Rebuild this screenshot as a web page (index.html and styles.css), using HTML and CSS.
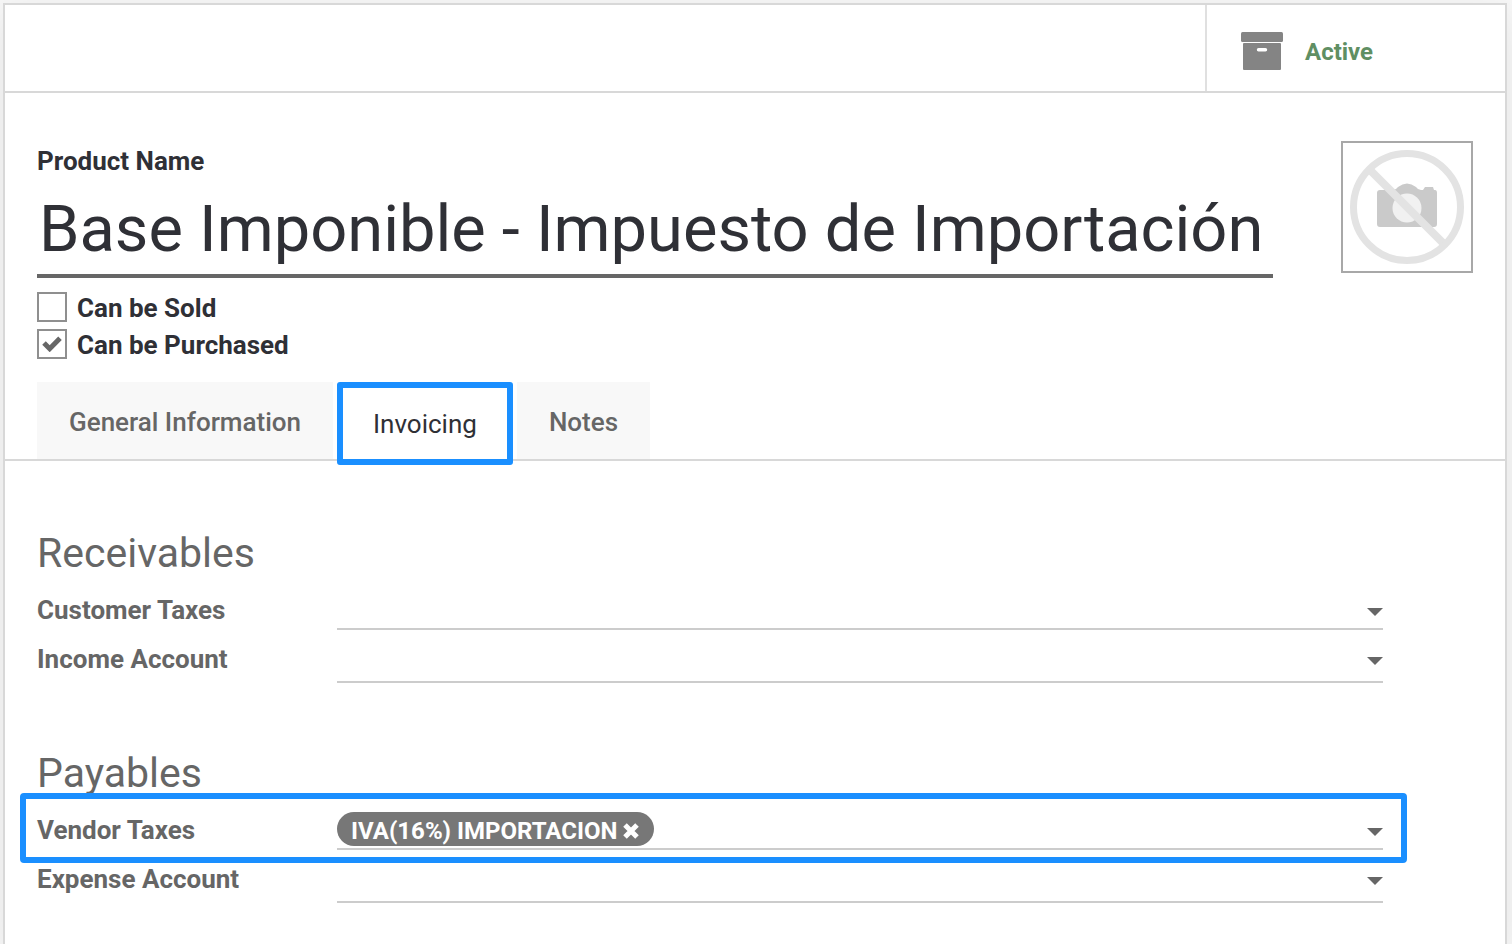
FILE: index.html
```html
<!DOCTYPE html>
<html lang="en">
<head>
<meta charset="utf-8">
<title>Base Imponible - Impuesto de Importación</title>
<link rel="stylesheet" href="styles.css">
</head>
<body>
<main class="sheet">
  <header class="button-box">
    <button class="stat-button" type="button">
      <svg class="archive-icon" viewBox="0 0 42 38" aria-hidden="true">
        <rect x="0" y="0" width="42" height="10" rx="1.5"/>
        <path fill-rule="evenodd" d="M3 11h36q1 0 1 1v25q0 1-1 1H3q-1 0-1-1V12q0-1 1-1zM17.500 16a1.700 1.700 0 0 0 0 3.400h7a1.700 1.700 0 0 0 0-3.400z"/>
      </svg>
      <span class="stat-text">Active</span>
    </button>
  </header>

  <section class="product">
    <div class="title">
      <label class="title-label" for="name">Product Name</label>
      <input class="title-input" id="name" type="text" value="Base Imponible - Impuesto de Importación">
      <div class="options">
        <label class="option">
          <span class="check"><input class="check-box" type="checkbox"></span>
          <span class="option-text">Can be Sold</span>
        </label>
        <label class="option">
          <span class="check">
            <input class="check-box" type="checkbox" checked>
            <svg class="check-mark" viewBox="0 0 20 16" aria-hidden="true"><path d="M2 7l5.700 5.700L18 2.300"/></svg>
          </span>
          <span class="option-text">Can be Purchased</span>
        </label>
      </div>
    </div>
    <button class="picture" type="button" aria-label="Product image">
      <svg viewBox="0 0 128 128" aria-hidden="true">
        <path fill="#cacaca" d="M37 47h13q3 0 5-3 9-7 18 0 2 3 5 3h2l2-3h8l1 3h1q2 0 2 3v31q0 3-3 3H37q-3 0-3-3V50q0-3 3-3z"/>
        <circle cx="64" cy="65" r="14.500" fill="#f1f1f1"/>
        <path d="M27 27l74 74" stroke="#e3e3e3" stroke-width="8"/>
        <circle cx="64" cy="64" r="53.500" fill="none" stroke="#e3e3e3" stroke-width="7"/>
      </svg>
    </button>
  </section>

  <nav class="tabs" role="tablist">
    <button class="tab" role="tab" type="button" aria-selected="false">General Information</button>
    <button class="tab tab-active" role="tab" type="button" aria-selected="true">Invoicing</button>
    <button class="tab" role="tab" type="button" aria-selected="false">Notes</button>
  </nav>

  <div class="page">
    <section class="group">
      <h2 class="group-title">Receivables</h2>
      <div class="row row-tags">
        <label class="row-label" for="customer-taxes">Customer Taxes</label>
        <div class="field field-tags">
          <select class="field-select" id="customer-taxes"><option></option></select>
          <span class="caret"></span>
        </div>
      </div>
      <div class="row">
        <label class="row-label" for="income-account">Income Account</label>
        <div class="field">
          <select class="field-select" id="income-account"><option></option></select>
          <span class="caret"></span>
        </div>
      </div>
    </section>

    <section class="group">
      <h2 class="group-title">Payables</h2>
      <div class="row row-tags row-marked">
        <label class="row-label" for="vendor-taxes">Vendor Taxes</label>
        <div class="field field-tags">
          <span class="tag">IVA(16%) IMPORTACION
            <button class="tag-remove" type="button" aria-label="Remove">
              <svg viewBox="0 0 16 16" aria-hidden="true"><path d="M2 2l12 12M14 2L2 14"/></svg>
            </button>
          </span>
          <select class="field-select" id="vendor-taxes"><option></option></select>
          <span class="caret"></span>
        </div>
      </div>
      <div class="row">
        <label class="row-label" for="expense-account">Expense Account</label>
        <div class="field">
          <select class="field-select" id="expense-account"><option></option></select>
          <span class="caret"></span>
        </div>
      </div>
    </section>
  </div>
</main>
</body>
</html>
```
FILE: styles.css
```css
* {
  box-sizing: border-box;
}

body {
  margin: 0;
  padding: 3px 5px 0 3px;
  background: #f7f7f7;
  font: 26px/38px Roboto, sans-serif;
  color: #2f3036;
}

button,
input,
select {
  margin: 0;
  padding: 0;
  border: 0;
  background: none;
  font: inherit;
  color: inherit;
}

.sheet {
  min-height: calc(100vh - 3px);
  border: 2px solid #d8d8d8;
  border-bottom: 0;
  background: #fff;
  box-shadow: 0 10px 40px rgba(0, 0, 0, 0.08);
}

.button-box {
  display: flex;
  justify-content: flex-end;
  border-bottom: 2px solid #d8d8d8;
}

.stat-button {
  display: flex;
  align-items: center;
  gap: 22px;
  width: 300px;
  height: 86px;
  padding: 6px 34px 0;
  border-left: 2px solid #e0e0e0;
}

.stat-text {
  padding-top: 2px;
  font-size: 24px;
  font-weight: 700;
  color: #5f8f63;
}

.archive-icon {
  width: 42px;
  height: 38px;
  fill: #848484;
}

.product {
  display: flex;
  align-items: flex-start;
  gap: 68px;
  padding: 48px 32px 0;
}

.title {
  display: flex;
  flex: 1;
  flex-direction: column;
  min-width: 0;
}

.title-label {
  padding-top: 1px;
  font-weight: 700;
}

.title-input {
  width: 100%;
  height: 98px;
  padding: 3px 3px 0 2px;
  border-bottom: 4px solid #666;
  font-size: 65px;
}

.options {
  display: flex;
  flex-direction: column;
  align-items: flex-start;
  gap: 7px;
  padding-top: 14px;
}

.option {
  display: flex;
  align-items: center;
  gap: 10px;
  height: 30px;
  font-weight: 700;
}

.option-text {
  padding-top: 2px;
}

.check {
  display: grid;
  place-items: center;
}

.check-box {
  grid-area: 1 / 1;
  width: 30px;
  height: 30px;
  border: 2px solid #8f8f8f;
  appearance: none;
}

.check-mark {
  grid-area: 1 / 1;
  width: 20px;
  height: 16px;
  fill: none;
  stroke: #666;
  stroke-width: 5;
  pointer-events: none;
}

.picture {
  width: 132px;
  height: 132px;
  border: 2px solid #a8a8a8;
}

.picture svg {
  display: block;
}

.tabs {
  display: flex;
  gap: 4px;
  padding: 23px 32px 0;
  border-bottom: 2px solid #d8d8d8;
}

.tab {
  height: 77px;
  padding: 2px 32px 0;
  background: #f8f8f8;
  font-weight: 500;
  color: #666;
}

.tab-active {
  height: 83px;
  margin-bottom: -6px;
  padding: 0 30px;
  border: 6px solid #1a8fff;
  border-radius: 3px;
  background: #fff;
  font-weight: 400;
  color: #2f3036;
}

.page {
  display: flex;
  flex-direction: column;
  gap: 60px;
  padding: 62px 122px 40px 32px;
}

.group-title {
  margin: 0 0 8px;
  font-size: 41px;
  line-height: 60px;
  font-weight: 400;
  color: #666;
}

.row {
  display: grid;
  grid-template-columns: 300px 1fr;
  align-items: start;
}

.row-tags {
  padding-bottom: 10px;
}

.row-marked {
  position: relative;
}

.row-marked::after {
  content: "";
  position: absolute;
  inset: -18px -24px -3px -17px;
  border: 6px solid #1a8fff;
  border-radius: 4px;
  pointer-events: none;
}

.row-label {
  font-weight: 700;
  color: #666;
}

.field {
  display: grid;
  grid-template-columns: auto 1fr;
  height: 43px;
  border-bottom: 2px solid #ccc;
}

.field-tags {
  height: 39px;
}

.field-select {
  grid-area: 1 / 2;
  width: 100%;
  appearance: none;
}

.caret {
  grid-area: 1 / 2;
  justify-self: end;
  width: 16px;
  height: 8px;
  margin-top: 17px;
  background: #666;
  clip-path: polygon(0 0, 100% 0, 50% 100%);
  pointer-events: none;
}

.tag {
  display: flex;
  align-items: center;
  gap: 6px;
  height: 34px;
  margin-top: 1px;
  padding: 3px 15px 0 14px;
  border-radius: 17px;
  background: #777;
  font-size: 24px;
  line-height: 32px;
  font-weight: 700;
  color: #fff;
}

.tag-remove {
  width: 16px;
  height: 16px;
}

.tag-remove svg {
  display: block;
  fill: none;
  stroke: #fff;
  stroke-width: 5;
}
```
